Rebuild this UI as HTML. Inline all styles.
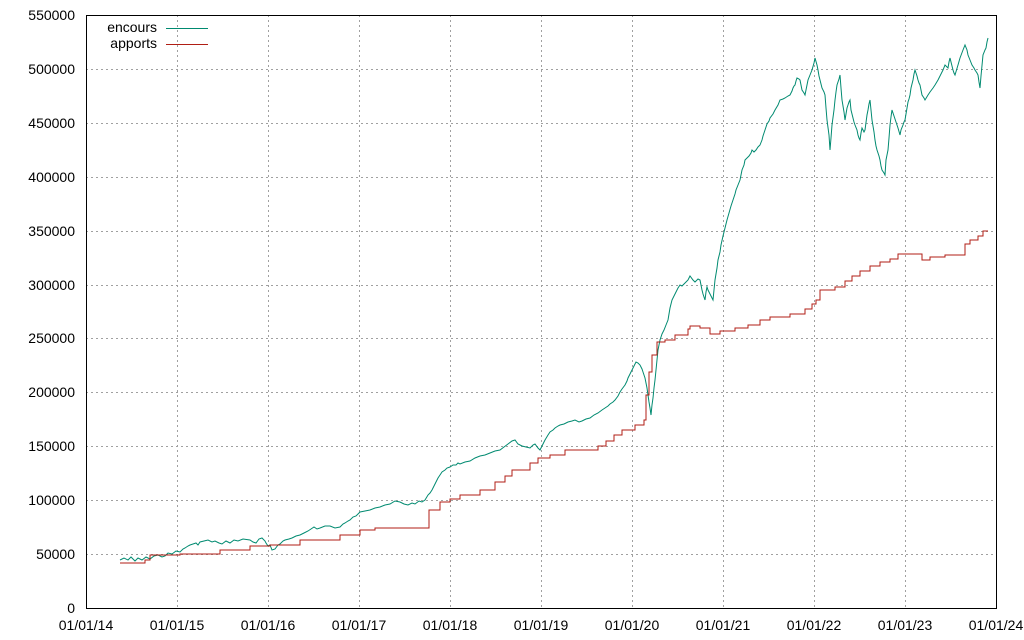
<!DOCTYPE html><html><head><meta charset="utf-8"><style>html,body{margin:0;padding:0;background:#fff}svg{display:block}text{font-family:"Liberation Sans",sans-serif;font-size:14px;fill:#000}</style></head><body>
<svg width="1024" height="640" xmlns="http://www.w3.org/2000/svg">
<g stroke="#a0a0a0" stroke-dasharray="2,3" stroke-width="1">
<line x1="86" x2="996" y1="554.5" y2="554.5"/><line x1="86" x2="996" y1="500.5" y2="500.5"/><line x1="86" x2="996" y1="446.5" y2="446.5"/><line x1="86" x2="996" y1="392.5" y2="392.5"/><line x1="86" x2="996" y1="338.5" y2="338.5"/><line x1="86" x2="996" y1="285.5" y2="285.5"/><line x1="86" x2="996" y1="231.5" y2="231.5"/><line x1="86" x2="996" y1="177.5" y2="177.5"/><line x1="86" x2="996" y1="123.5" y2="123.5"/><line x1="86" x2="996" y1="69.5" y2="69.5"/>
<line x1="177.5" x2="177.5" y1="15" y2="608"/><line x1="268.5" x2="268.5" y1="15" y2="608"/><line x1="359.5" x2="359.5" y1="15" y2="608"/><line x1="450.5" x2="450.5" y1="15" y2="608"/><line x1="541.5" x2="541.5" y1="15" y2="608"/><line x1="632.5" x2="632.5" y1="15" y2="608"/><line x1="723.5" x2="723.5" y1="15" y2="608"/><line x1="814.5" x2="814.5" y1="15" y2="608"/><line x1="905.5" x2="905.5" y1="15" y2="608"/>
</g>
<rect x="86.5" y="15.5" width="910" height="593" fill="none" stroke="#000"/>
<g text-anchor="end">
<text x="75" y="613">0</text><text x="75" y="559">50000</text><text x="75" y="505">100000</text><text x="75" y="451">150000</text><text x="75" y="397">200000</text><text x="75" y="343">250000</text><text x="75" y="290">300000</text><text x="75" y="236">350000</text><text x="75" y="182">400000</text><text x="75" y="128">450000</text><text x="75" y="74">500000</text><text x="75" y="20">550000</text>
</g>
<g text-anchor="middle">
<text x="86" y="630">01/01/14</text><text x="177" y="630">01/01/15</text><text x="268" y="630">01/01/16</text><text x="359" y="630">01/01/17</text><text x="450" y="630">01/01/18</text><text x="541" y="630">01/01/19</text><text x="632" y="630">01/01/20</text><text x="723" y="630">01/01/21</text><text x="814" y="630">01/01/22</text><text x="905" y="630">01/01/23</text><text x="996" y="630">01/01/24</text>
</g>
<text x="157" y="32" text-anchor="end">encours</text>
<text x="157" y="48" text-anchor="end">apports</text>
<line x1="166" x2="208" y1="28.5" y2="28.5" stroke="#008a70"/>
<line x1="166" x2="208" y1="44.5" y2="44.5" stroke="#b01e14"/>
<polyline fill="none" stroke="#008a70" stroke-width="1" points="120,560 124,558 128,560 131,557 135,561 138,558 142,560 146,557 150,559 154,556 158,555 162,557 165,556 168,553 172,554 176,551 180,552 183,549 185,548 188,546 190,545 193,544 196,543 198,545 200,542 204,541 208,540 212,542 215,541 219,543 222,544 226,541 230,543 234,540 238,541 243,539 250,540 253,542 256,543 259,539 262,538 265,541 266,543 268,546 270,545 272,550 275,549 278,545 280,544 283,541 285,540 289,539 292,538 296,536 300,535 304,533 308,531 311,529 314,527 317,529 320,528 325,526 330,526 335,528 340,527 343,524 345,523 348,521 350,520 353,517 356,516 358,514 360,512 365,511 370,510 375,508 380,507 385,505 390,504 395,501 400,502 404,504 408,505 412,503 415,504 419,501 422,502 425,500 428,495 430,493 432,490 434,486 436,482 438,478 440,475 442,472 445,470 447,468 450,467 453,465 456,465 458,463 460,464 465,462 470,461 475,458 480,456 485,455 490,453 495,451 500,450 504,447 508,444 512,441 515,440 518,444 522,446 526,447 530,448 533,445 535,444 538,448 540,450 543,444 545,440 548,435 550,432 553,430 555,428 558,426 560,425 564,424 568,422 572,421 575,420 579,422 582,421 586,419 590,418 594,415 598,413 602,410 605,408 608,406 610,404 613,402 615,400 618,396 620,392 622,389 625,385 627,381 628,378 630,374 632,370 634,366 636,362 638,363 640,365 642,369 643,372 644,375 645,378 646,383 647,388 648,395 649,402 650,408 651,415 652,405 653,398 654,388 655,380 656,370 657,360 658,350 660,340 662,334 664,330 666,325 668,320 669,314 670,308 671,304 672,300 674,296 676,292 678,288 680,285 682,286 685,283 688,280 690,276 693,280 695,282 698,279 700,280 702,290 703,294 705,300 706,292 707,287 708,290 710,294 711,296 713,300 714,290 715,280 717,268 718,260 720,252 721,245 723,236 725,228 727,220 729,213 731,206 733,200 735,194 736,190 738,185 740,180 741,175 742,170 744,165 745,160 747,158 749,156 751,153 752,150 754,152 756,150 758,147 760,145 762,140 763,136 764,133 765,130 766,127 767,124 769,121 770,118 773,114 775,110 778,105 780,100 783,99 785,98 788,96 790,95 792,91 793,88 794,86 795,85 796,81 797,78 799,79 800,80 801,85 802,90 804,93 805,95 807,85 808,80 810,75 812,70 814,63 815,58 817,65 818,70 819,76 820,80 821,84 822,88 824,92 825,95 826,108 827,120 829,135 830,150 831,138 832,125 834,110 835,100 836,92 837,85 839,79 840,75 841,88 842,100 844,112 845,120 847,108 848,105 849,102 850,100 851,110 853,118 854,122 855,125 857,130 858,135 859,138 860,140 861,133 862,128 864,132 865,130 867,115 868,110 869,104 870,100 871,110 872,120 874,132 875,140 876,146 877,150 879,156 880,160 881,166 882,170 884,173 885,175 886,160 887,155 888,150 889,138 890,125 891,117 892,110 894,116 896,122 898,128 900,135 901,130 903,125 904,122 905,120 907,108 908,102 909,99 910,95 911,88 913,80 914,74 915,70 917,76 918,80 919,83 920,85 921,90 922,95 924,98 925,100 928,95 930,92 933,88 935,85 938,80 940,76 943,70 945,65 947,67 948,68 949,62 950,58 952,66 953,70 954,73 955,75 958,65 960,58 963,50 965,45 967,50 968,55 970,60 972,65 974,68 975,70 977,73 978,75 979,82 980,88 981,76 983,55 985,50 986,48 987,42 988,38"/>
<polyline fill="none" stroke="#b01e14" stroke-width="1" shape-rendering="crispEdges" points="120,563 145,563 145,560 150,560 150,555 180,555 180,554 220,554 220,550 250,550 250,546 270,546 270,545 300,545 300,540 340,540 340,535 360,535 360,530 375,530 375,528 429,528 429,510 440,510 440,502 450,502 450,499 460,499 460,495 480,495 480,490 495,490 495,482 505,482 505,476 512,476 512,470 530,470 530,463 538,463 538,458 550,458 550,455 565,455 565,450 598,450 598,446 606,446 606,441 614,441 614,435 622,435 622,430 635,430 635,425 644,425 644,420 646,420 646,395 649,395 649,372 652,372 652,355 657,355 657,342 665,342 665,340 675,340 675,335 688,335 688,329 690,329 690,326 700,326 700,328 710,328 710,334 720,334 720,331 735,331 735,328 748,328 748,325 760,325 760,320 770,320 770,317 790,317 790,314 805,314 805,309 812,309 812,304 816,304 816,300 820,300 820,290 835,290 835,287 845,287 845,281 852,281 852,276 860,276 860,271 870,271 870,266 880,266 880,262 890,262 890,259 898,259 898,254 922,254 922,260 930,260 930,257 945,257 945,255 965,255 965,244 970,244 970,240 978,240 978,236 983,236 983,231 988,231"/>
</svg>
</body></html>
